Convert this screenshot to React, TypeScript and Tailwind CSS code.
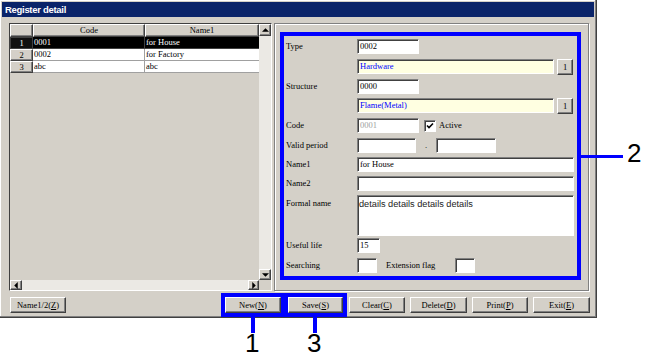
import React from "react";

const serif = "font-['Liberation_Serif','Times_New_Roman',serif]";
const raised =
  "border border-t-white border-l-white border-r-[#404040] border-b-[#404040] shadow-[inset_-1px_-1px_0_#808080] bg-[#d4d0c8]";
const sunken =
  "border border-t-[#808080] border-l-[#808080] border-r-white border-b-white shadow-[inset_1px_1px_0_#404040]";

function Input({ w, h = 15, value = "", cls = "", txt = "text-black", yellow = false }: { w: number; h?: number; value?: string; cls?: string; txt?: string; yellow?: boolean }) {
  return (
    <div
      className={`${sunken} ${yellow ? "bg-[#ffffe1]" : "bg-white"} ${serif} text-[8.5px] leading-[13px] pl-[2px] overflow-hidden whitespace-nowrap ${txt} ${cls}`}
      style={{ width: w, height: h }}
    >
      {value}
    </div>
  );
}

function Btn({ w = 57, children, cls = "" }: { w?: number; children: React.ReactNode; cls?: string }) {
  return (
    <div
      className={`${raised} ${serif} h-[16px] text-[8.5px] flex items-center justify-center text-black ${cls}`}
      style={{ width: w }}
    >
      {children}
    </div>
  );
}

function Label({ children }: { children: React.ReactNode }) {
  return <div className={`w-[71px] ${serif} text-[8.5px] text-black leading-[15px]`}>{children}</div>;
}

function Tri({ dir }: { dir: "up" | "down" | "left" | "right" }) {
  const pts =
    dir === "up" ? "0,3 3,0 6,3" : dir === "down" ? "0,0 6,0 3,3" : dir === "left" ? "3,0 3,6 0,3" : "0,0 0,6 3,3";
  const w = dir === "up" || dir === "down" ? 6 : 3;
  const h = dir === "up" || dir === "down" ? 3 : 6;
  return (
    <svg width={w + 1} height={h + 1} viewBox={`0 0 ${w} ${h}`}>
      <polygon points={pts} fill="#000" />
    </svg>
  );
}

function U({ c }: { c: string }) {
  return <span className="underline">{c}</span>;
}

export default function App() {
  const rows = [
    { n: "1", code: "0001", name: "for House", sel: true },
    { n: "2", code: "0002", name: "for Factory", sel: false },
    { n: "3", code: "abc", name: "abc", sel: false },
  ];
  return (
    <div className="relative w-[651px] h-[364px] bg-white">
      {/* window */}
      <div className="w-[597px] h-[318px] bg-[#d4d0c8] pl-[2px] pr-[3px] pt-[2px] shadow-[inset_-1px_-1px_0_#404040,inset_-2px_-2px_0_#808080,inset_1px_1px_0_#ffffff] flex flex-col">
        <div className="h-[15px] bg-[#0a246a] text-white font-bold text-[9.5px] leading-[15px] pl-[3px] font-['Liberation_Sans',Arial,sans-serif] tracking-[-0.3px]">
          Register detail
        </div>
        <div className="flex mt-[6px] pl-[7px] gap-[2px]">
          {/* grid */}
          <div className="w-[263px] h-[268px] flex flex-col border border-t-[#404040] border-l-[#404040] border-r-white border-b-white">
            <div className="flex flex-1 min-h-0">
              <div className="w-[249px] flex flex-col bg-[#d4d0c8]">
                <div className={`flex h-[13px] ${serif} text-[8.5px] leading-[11px]`}>
                  <div className={`${raised} w-[23px]`} />
                  <div className={`${raised} w-[112px] text-center`}>Code</div>
                  <div className={`${raised} flex-1 text-center`}>Name1</div>
                </div>
                {rows.map((r) => (
                  <div key={r.n} className={`flex h-[12px] ${serif} text-[8.5px] leading-[11px]`}>
                    <div
                      className={`w-[23px] text-center ${
                        r.sel
                          ? "bg-[#101010] text-white border border-[#404040]"
                          : `${raised} text-black`
                      }`}
                    >
                      {r.n}
                    </div>
                    <div
                      className={`w-[112px] pl-[1px] border-r border-b ${
                        r.sel ? "bg-black text-white border-[#404040]" : "bg-white text-black border-[#a0a0a0]"
                      }`}
                    >
                      {r.code}
                    </div>
                    <div
                      className={`flex-1 pl-[1px] border-b ${
                        r.sel ? "bg-black text-white border-[#404040]" : "bg-white text-black border-[#a0a0a0]"
                      }`}
                    >
                      {r.name}
                    </div>
                  </div>
                ))}
              </div>
              <div className="w-[12px] flex flex-col bg-[#ebe9e4]">
                <div className={`${raised} h-[12px] flex items-center justify-center`}>
                  <Tri dir="up" />
                </div>
                <div className="flex-1" />
                <div className={`${raised} h-[11px] flex items-center justify-center`}>
                  <Tri dir="down" />
                </div>
              </div>
            </div>
            <div className="flex h-[10px]">
              <div className="w-[249px] flex bg-[#ebe9e4]">
                <div className={`${raised} w-[12px] flex items-center justify-center`}>
                  <Tri dir="left" />
                </div>
                <div className="flex-1" />
                <div className={`${raised} w-[11px] flex items-center justify-center`}>
                  <Tri dir="right" />
                </div>
              </div>
              <div className="w-[12px] bg-[#d4d0c8]" />
            </div>
          </div>
          {/* right panel */}
          <div className="w-[315px] h-[268px] border border-[#808080] shadow-[inset_1px_1px_0_#ffffff,1px_1px_0_#ffffff] pl-[5px] pt-[8px]">
            <div className="w-[301px] h-[248px] border-4 border-[#0000ff] pl-[2px] pt-[3px] flex flex-col">
              <div className="flex h-[15px]">
                <Label>Type</Label>
                <Input w={62} value="0002" />
              </div>
              <div className="flex h-[16px] mt-[5px]">
                <div className="w-[71px]" />
                <Input w={197} value="Hardware" yellow txt="text-[#0000ff]" />
                <Btn w={16} cls="ml-[3px]">1</Btn>
              </div>
              <div className="flex h-[15px] mt-[4px]">
                <Label>Structure</Label>
                <Input w={62} value="0000" />
              </div>
              <div className="flex h-[16px] mt-[4px]">
                <div className="w-[71px]" />
                <Input w={197} value="Flame(Metal)" yellow txt="text-[#0000ff]" />
                <Btn w={16} cls="ml-[3px]">1</Btn>
              </div>
              <div className="flex h-[15px] mt-[4px] items-center">
                <Label>Code</Label>
                <Input w={62} value="0001" txt="text-[#a0a0a0]" />
                <div className={`${sunken} bg-white w-[12px] h-[12px] ml-[5px] flex items-center justify-center`}>
                  <svg width="8" height="8" viewBox="0 0 8 8">
                    <polyline points="1,3.5 3,5.5 7,1.5" fill="none" stroke="#000" strokeWidth="1.6" />
                  </svg>
                </div>
                <div className={`${serif} text-[8.5px] ml-[3px] text-black`}>Active</div>
              </div>
              <div className="flex h-[15px] mt-[5px]">
                <Label>Valid period</Label>
                <Input w={59} />
                <div className={`${serif} text-[8.5px] w-[20px] text-center leading-[15px]`}>.</div>
                <Input w={60} />
              </div>
              <div className="flex h-[15px] mt-[4px]">
                <Label>Name1</Label>
                <Input w={217} value="for House" />
              </div>
              <div className="flex h-[15px] mt-[4px]">
                <Label>Name2</Label>
                <Input w={217} />
              </div>
              <div className="flex h-[41px] mt-[4px]">
                <div className={`w-[71px] ${serif} text-[8.5px] text-black pt-[2px]`}>Formal name</div>
                <div
                  className={`${sunken} bg-white w-[217px] h-[41px] pl-[1px] pt-[2px] text-[9.2px] leading-[12px] text-[#222] font-['Liberation_Sans',Arial,sans-serif]`}
                >
                  details details details details
                </div>
              </div>
              <div className="flex h-[15px] mt-[2px]">
                <Label>Useful life</Label>
                <Input w={23} value="15" />
              </div>
              <div className="flex h-[15px] mt-[5px]">
                <Label>Searching</Label>
                <Input w={20} />
                <div className={`${serif} text-[8.5px] leading-[15px] ml-[9px] w-[69px]`}>Extension flag</div>
                <Input w={20} />
              </div>
            </div>
          </div>
        </div>
        {/* buttons */}
        <div className="flex items-center mt-[2px] pl-[8px] h-[24px]">
          <Btn w={56}>
            Name1/2(<U c="Z" />)
          </Btn>
          <div className="w-[155px]" />
          <div className="w-[64px] h-[24px] border-4 border-[#0000ff] flex items-center">
            <Btn w={56}>
              New(<U c="N" />)
            </Btn>
          </div>
          <div className="w-[63px] h-[24px] border-4 border-[#0000ff] flex items-center -ml-[1px]">
            <Btn w={55}>
              Save(<U c="S" />)
            </Btn>
          </div>
          <Btn w={56} cls="ml-[2px]">
            Clear(<U c="C" />)
          </Btn>
          <Btn w={57} cls="ml-[5px]">
            Delete(<U c="D" />)
          </Btn>
          <Btn w={56} cls="ml-[5px]">
            Print(<U c="P" />)
          </Btn>
          <Btn w={57} cls="ml-[5px]">
            Exit(<U c="E" />)
          </Btn>
        </div>
      </div>

      {/* annotations */}
      <div className="absolute left-[251px] top-[316px] w-[4px] h-[17px] bg-[#0000ff]" />
      <div className="absolute left-[313px] top-[316px] w-[4px] h-[17px] bg-[#0000ff]" />
      <div className="absolute left-[580px] top-[155px] w-[43px] h-[3px] bg-[#0000ff]" />
      <div className="absolute left-[245px] top-[328px] text-[26px] leading-[30px] font-['Liberation_Sans',Arial,sans-serif] text-black">
        1
      </div>
      <div className="absolute left-[307px] top-[328px] text-[26px] leading-[30px] font-['Liberation_Sans',Arial,sans-serif] text-black">
        3
      </div>
      <div className="absolute left-[627px] top-[138px] text-[26px] leading-[30px] font-['Liberation_Sans',Arial,sans-serif] text-black">
        2
      </div>
    </div>
  );
}
